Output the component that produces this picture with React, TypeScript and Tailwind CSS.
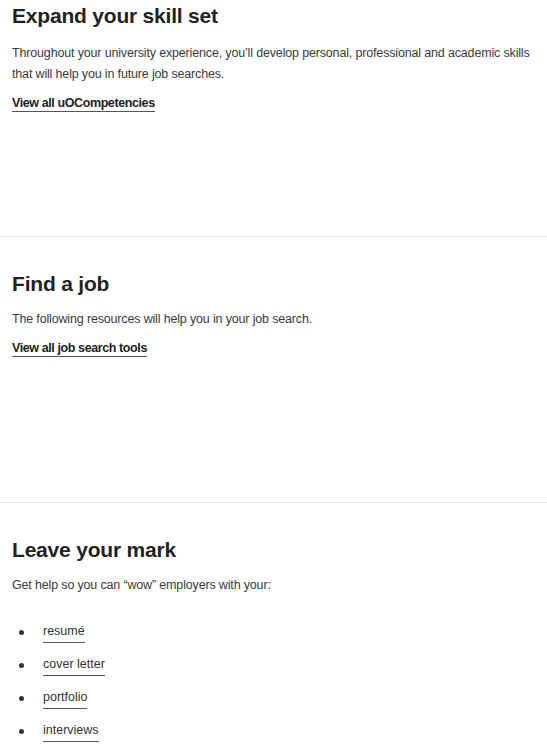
import React from 'react';

const font = { fontFamily: '"Liberation Sans", Arial, sans-serif' };

const Section: React.FC<{ title: string; first?: boolean; children: React.ReactNode }> = ({ title, first, children }) => (
  <section className={`${first ? 'pt-[2px] h-[236px]' : 'pt-[33px] h-[266px] border-t border-[#e0e0e0]'} pl-3`}>
    <h2 className="text-[21px] leading-[28px] font-bold text-[#222] tracking-[-0.2px]">{title}</h2>
    {children}
  </section>
);

const Link: React.FC<{ children: React.ReactNode; bold?: boolean }> = ({ children, bold }) => (
  <a
    href="#"
    className={`${bold ? 'font-bold text-[#222] tracking-[-0.4px]' : 'text-[#333]'} border-b border-[#555] pb-[1px]`}
  >
    {children}
  </a>
);

export default function App() {
  const items = ['resumé', 'cover letter', 'portfolio', 'interviews'];
  return (
    <div className="bg-white w-[547px] h-[753px] overflow-hidden" style={font}>
      <Section title="Expand your skill set" first>
        <p className="mt-[13px] text-[12.5px] leading-[21px] tracking-[-0.16px] text-[#3a3a3a]">
          Throughout your university experience, you’ll develop personal, professional and academic skills that will help you in future job searches.
        </p>
        <p className="mt-[8px] text-[12.5px] leading-[20px]">
          <Link bold>View all uOCompetencies</Link>
        </p>
      </Section>
      <Section title="Find a job">
        <p className="mt-[11px] text-[12.5px] leading-[21px] tracking-[-0.16px] text-[#3a3a3a]">
          The following resources will help you in your job search.
        </p>
        <p className="mt-[8px] text-[12.5px] leading-[20px]">
          <Link bold>View all job search tools</Link>
        </p>
      </Section>
      <Section title="Leave your mark">
        <p className="mt-[11px] text-[12.5px] leading-[21px] tracking-[-0.16px] text-[#3a3a3a]">
          Get help so you can “wow” employers with your:
        </p>
        <ul className="mt-[26px] flex flex-col gap-[13px] text-[12.5px] leading-[20px]">
          {items.map((it) => (
            <li key={it} className="flex items-center h-[20px]">
              <span className="w-[31px] pl-[7px] flex items-center">
                <span className="block w-[5px] h-[5px] rounded-full bg-[#333]" />
              </span>
              <Link>{it}</Link>
            </li>
          ))}
        </ul>
      </Section>
    </div>
  );
}
